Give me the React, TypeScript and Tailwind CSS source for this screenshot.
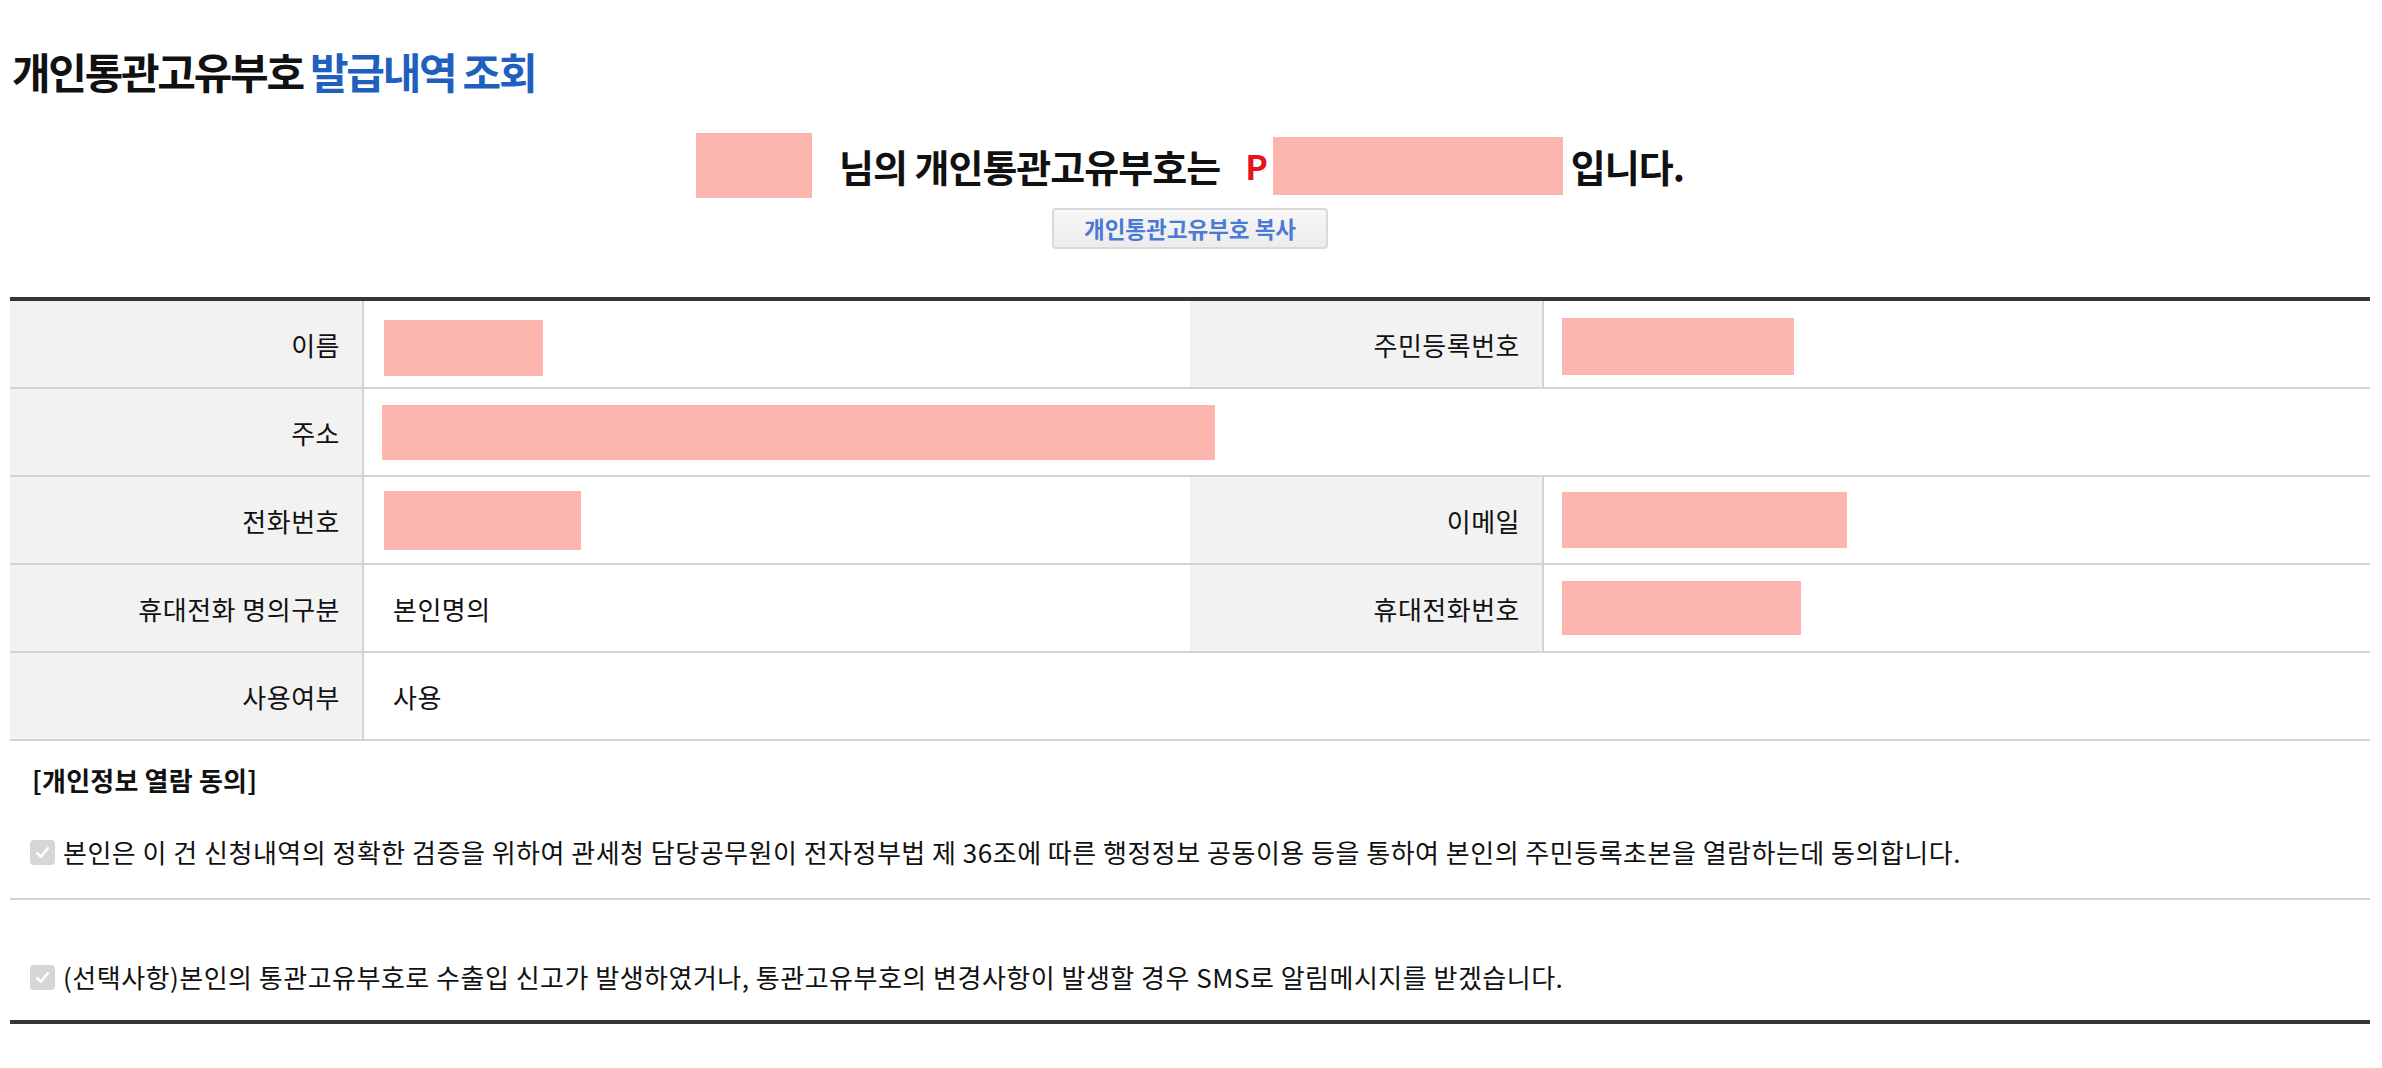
import React from "react";

const FONT = { fontFamily: '"Noto Sans CJK KR", "Noto Sans", sans-serif' };

function Redact({ w, h }: { w: number; h: number }) {
  return <div className="bg-[#fcb5af]" style={{ width: w, height: h }} />;
}

function Check() {
  return (
    <div className="w-[25px] h-[25px] rounded-[4px] bg-[#d6d6d6] flex items-center justify-center shrink-0">
      <svg width="17" height="17" viewBox="0 0 16 16" fill="none">
        <path d="M3 8.5 L6.5 12 L13 4" stroke="#ffffff" strokeWidth="2.4" strokeLinecap="round" strokeLinejoin="round" />
      </svg>
    </div>
  );
}

function Label({ children }: { children: React.ReactNode }) {
  return (
    <div className="bg-[#f2f2f2] border-r-2 border-[#d3d3d3] flex items-center justify-end pr-[22px] text-[26px] tracking-[0.5px] text-[#111]">
      {children}
    </div>
  );
}

function Value({ children, span3 }: { children?: React.ReactNode; span3?: boolean }) {
  return (
    <div className={span3 ? "col-span-3 flex items-center pl-[18px] text-[26px] tracking-[0.5px] text-[#111]" : "flex items-center pl-[18px] text-[26px] tracking-[0.5px] text-[#111]"}>
      {children}
    </div>
  );
}

export default function App() {
  return (
    <div className="min-h-screen bg-white pl-[10px] pr-[12px]" style={FONT}>
      <h1 className="mt-[46px] ml-[2px] text-[42px] leading-[50px] font-bold tracking-[-2.3px] text-[#111]">
        개인통관고유부호 <span className="text-[#1f60bf]">발급내역 조회</span>
      </h1>

      <div className="mt-[37px] flex items-center justify-center">
        <Redact w={116} h={65} />
        <span className="ml-[27px] text-[38px] leading-[44px] font-bold tracking-[-1px] text-[#111]">님의 개인통관고유부호는</span>
        <span className="ml-[25px] text-[34px] leading-[44px] font-bold text-[#e8121c]">P</span>
        <div className="ml-[5px]">
          <Redact w={290} h={58} />
        </div>
        <span className="ml-[8px] text-[38px] leading-[44px] font-bold tracking-[-1px] text-[#111]">입니다.</span>
      </div>

      <div className="mt-[10px] flex justify-center">
        <button className="w-[276px] h-[41px] rounded-[4px] border-2 border-[#d9d9d9] bg-gradient-to-b from-[#f7f7f7] to-[#ececec] text-[22.5px] font-bold text-[#4a7ad2] leading-none">
          개인통관고유부호 복사
        </button>
      </div>

      <div className="mt-[48px] border-t-4 border-b-4 border-[#3a3636]">
        <div className="grid grid-cols-[15%_35%_15%_35%]">
          <div className="col-span-4 grid grid-cols-subgrid h-[88px] border-b-2 border-[#d3d3d3]">
            <Label>이름</Label>
            <Value>
              <div className="ml-[2px] mt-[8px]"><Redact w={159} h={56} /></div>
            </Value>
            <Label>주민등록번호</Label>
            <Value>
              <div className="mt-[5px]"><Redact w={232} h={57} /></div>
            </Value>
          </div>
          <div className="col-span-4 grid grid-cols-subgrid h-[88px] border-b-2 border-[#d3d3d3]">
            <Label>주소</Label>
            <Value span3>
              <Redact w={833} h={55} />
            </Value>
          </div>
          <div className="col-span-4 grid grid-cols-subgrid h-[88px] border-b-2 border-[#d3d3d3]">
            <Label>전화번호</Label>
            <Value>
              <div className="ml-[2px]"><Redact w={197} h={59} /></div>
            </Value>
            <Label>이메일</Label>
            <Value>
              <Redact w={285} h={56} />
            </Value>
          </div>
          <div className="col-span-4 grid grid-cols-subgrid h-[88px] border-b-2 border-[#d3d3d3]">
            <Label>휴대전화 명의구분</Label>
            <Value>
              <span className="ml-[11px]">본인명의</span>
            </Value>
            <Label>휴대전화번호</Label>
            <Value>
              <Redact w={239} h={54} />
            </Value>
          </div>
          <div className="col-span-4 grid grid-cols-subgrid h-[88px] border-b-2 border-[#d3d3d3]">
            <Label>사용여부</Label>
            <Value span3>
              <span className="ml-[11px]">사용</span>
            </Value>
          </div>
        </div>

        <div className="pt-[21px] pl-[22px] text-[26px] leading-[36px] font-bold tracking-[0.2px] text-[#111]">[개인정보 열람 동의]</div>

        <div className="pt-[36px] pb-[28px] pl-[20px] flex items-center gap-[8px] text-[26px] leading-[36px] tracking-[0.5px] text-[#111]">
          <Check />
          <span>본인은 이 건 신청내역의 정확한 검증을 위하여 관세청 담당공무원이 전자정부법 제 36조에 따른 행정정보 공동이용 등을 통하여 본인의 주민등록초본을 열람하는데 동의합니다.</span>
        </div>
        <div className="h-[2px] bg-[#d3d3d3]" />
        <div className="pt-[59px] pb-[25px] pl-[20px] flex items-center gap-[8px] text-[26px] leading-[36px] tracking-[0.5px] text-[#111]">
          <Check />
          <span>(선택사항)본인의 통관고유부호로 수출입 신고가 발생하였거나, 통관고유부호의 변경사항이 발생할 경우 SMS로 알림메시지를 받겠습니다.</span>
        </div>
      </div>
    </div>
  );
}
